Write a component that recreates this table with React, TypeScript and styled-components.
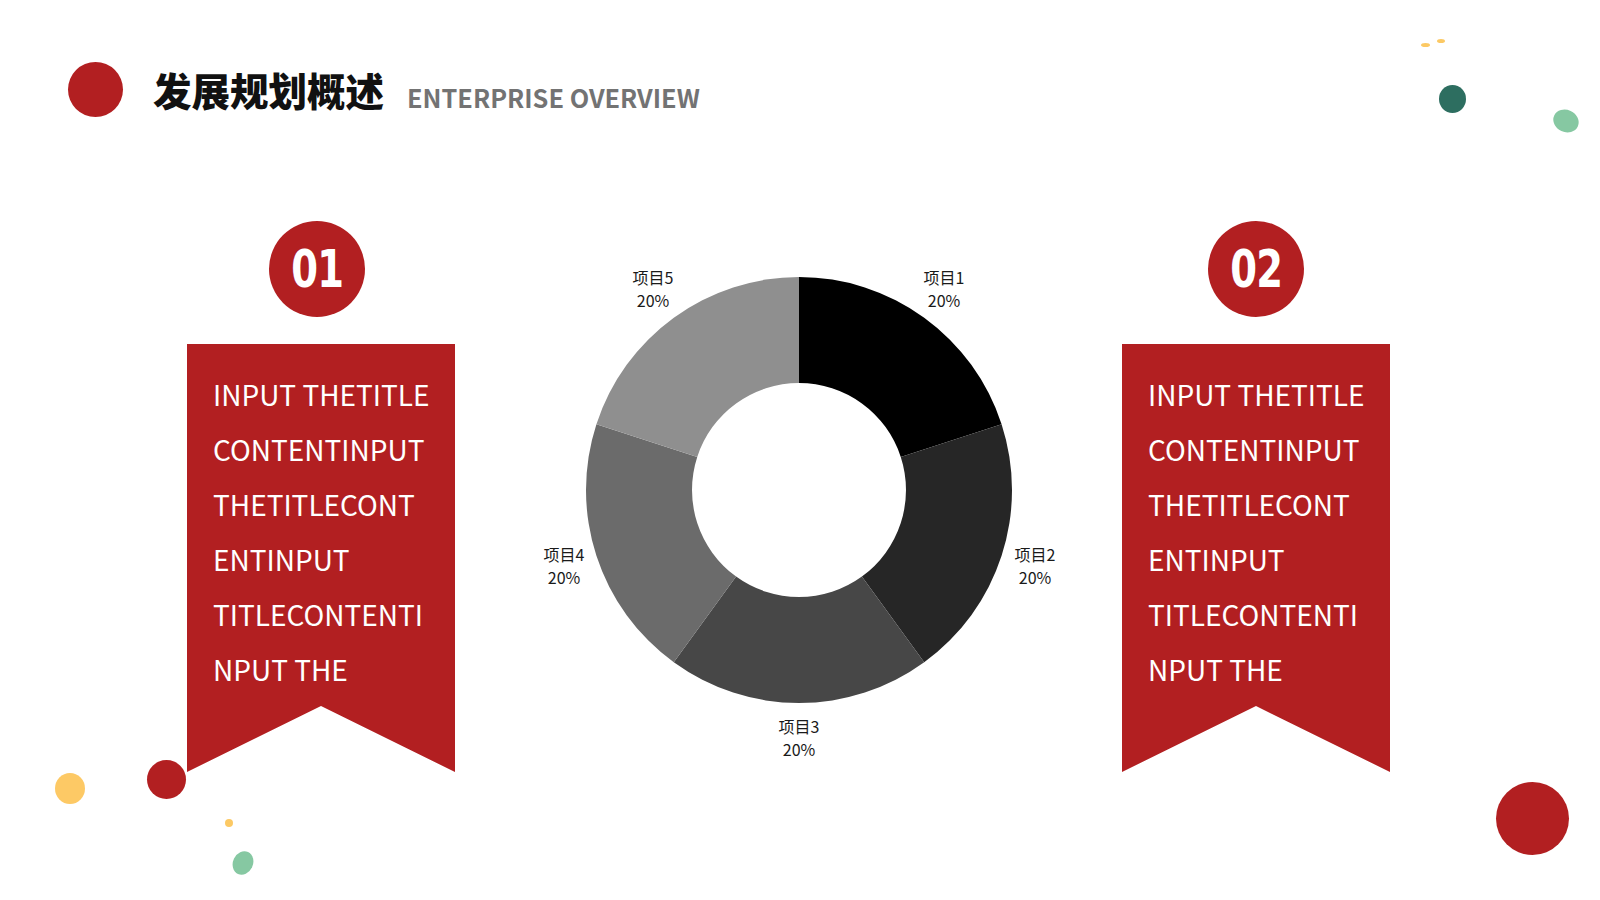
import * as React from "react";
import styled, { createGlobalStyle } from "styled-components";

const RED = "#b21f21";
const SANS = `"Noto Sans CJK SC", "Noto Sans", sans-serif`;

const GlobalStyle = createGlobalStyle`
  html, body {
    margin: 0;
    padding: 0;
    background: #ffffff;
  }
`;

const Page = styled.div`
  position: relative;
  width: 1600px;
  height: 900px;
  overflow: hidden;
  background: #ffffff;
  font-family: ${SANS};
`;

const Header = styled.header`
  display: flex;
  align-items: center;
  padding: 62px 0 0 68px;
  height: 55px;
`;

const HeaderDot = styled.div`
  width: 55px;
  height: 55px;
  border-radius: 50%;
  background: ${RED};
  flex-shrink: 0;
`;

const TitleGroup = styled.div`
  display: flex;
  align-items: baseline;
  margin-left: 30px;
`;

const Title = styled.h1`
  margin: 0;
  font-size: 38.5px;
  font-weight: 900;
  color: #111111;
  line-height: 1;
`;

const Subtitle = styled.span`
  margin-left: 23px;
  font-size: 25.3px;
  font-weight: 600;
  color: #737373;
  line-height: 1;
  transform: translateY(2px);
`;

const Main = styled.main`
  display: flex;
  align-items: flex-start;
  margin-top: 104px;
  padding-left: 187px;
`;

const Column = styled.section<{ $offset: number }>`
  display: flex;
  flex-direction: column;
  align-items: center;
  width: 268px;
  margin-left: ${(p) => p.$offset}px;
`;

const Badge = styled.div<{ $shift: number }>`
  width: 96px;
  height: 96px;
  border-radius: 50%;
  background: ${RED};
  display: flex;
  align-items: center;
  justify-content: center;
  color: #ffffff;
  margin-left: ${(p) => p.$shift * 2}px;
`;

const BadgeNum = styled.span`
  font-family: "DejaVu Sans", sans-serif;
  font-weight: 700;
  font-size: 52px;
  line-height: 1;
  transform: scaleX(0.74);
  letter-spacing: -1px;
`;

const Banner = styled.div`
  align-self: stretch;
  box-sizing: border-box;
  height: 428px;
  margin-top: 27px;
  padding: 23px 0 0 26px;
  background: ${RED};
  clip-path: polygon(0 0, 100% 0, 100% 100%, 50% calc(100% - 66px), 0 100%);
  color: #ffffff;
`;

const BannerLine = styled.div`
  font-size: 28px;
  font-weight: 400;
  line-height: 55px;
  white-space: nowrap;
`;

const Chart = styled.svg`
  display: block;
  margin-left: 44px;
  flex-shrink: 0;
  font-family: ${SANS};
`;

const Splash = styled.div<{
  $x: number;
  $y: number;
  $w: number;
  $h: number;
  $c: string;
  $r?: number;
}>`
  position: absolute;
  left: ${(p) => p.$x - p.$w / 2}px;
  top: ${(p) => p.$y - p.$h / 2}px;
  width: ${(p) => p.$w}px;
  height: ${(p) => p.$h}px;
  background: ${(p) => p.$c};
  border-radius: 50%;
  transform: rotate(${(p) => p.$r ?? 0}deg);
`;

const lines = [
  "INPUT THETITLE",
  "CONTENTINPUT",
  "THETITLECONT",
  "ENTINPUT",
  "TITLECONTENTI",
  "NPUT THE",
];

const CX = 300;
const CY = 269;
const R_OUT = 213;
const R_IN = 107;

const slices = [
  { color: "#000000", label: "项目1", lx: 445, ly: 56 },
  { color: "#262626", label: "项目2", lx: 536, ly: 333 },
  { color: "#474747", label: "项目3", lx: 300, ly: 505 },
  { color: "#6b6b6b", label: "项目4", lx: 65, ly: 333 },
  { color: "#8f8f8f", label: "项目5", lx: 154, ly: 56 },
];

const pt = (r: number, deg: number) => {
  const a = (deg * Math.PI) / 180;
  return `${(CX + r * Math.cos(a)).toFixed(2)} ${(CY + r * Math.sin(a)).toFixed(2)}`;
};

const slicePath = (i: number) => {
  const a0 = -90 + i * 72;
  const a1 = a0 + 72;
  return [
    `M ${pt(R_OUT, a0)}`,
    `A ${R_OUT} ${R_OUT} 0 0 1 ${pt(R_OUT, a1)}`,
    `L ${pt(R_IN, a1)}`,
    `A ${R_IN} ${R_IN} 0 0 0 ${pt(R_IN, a0)}`,
    "Z",
  ].join(" ");
};

const Card = ({
  num,
  offset,
  shift,
}: {
  num: string;
  offset: number;
  shift: number;
}) => (
  <Column $offset={offset}>
    <Badge $shift={shift}>
      <BadgeNum>{num}</BadgeNum>
    </Badge>
    <Banner>
      {lines.map((l) => (
        <BannerLine key={l}>{l}</BannerLine>
      ))}
    </Banner>
  </Column>
);

const App = () => {
  return (
    <Page>
      <GlobalStyle />
      <Header>
        <HeaderDot />
        <TitleGroup>
          <Title>发展规划概述</Title>
          <Subtitle>ENTERPRISE OVERVIEW</Subtitle>
        </TitleGroup>
      </Header>

      <Main>
        <Card num="01" offset={0} shift={-4} />
        <Chart width={600} height={560} viewBox="0 0 600 560">
          {slices.map((s, i) => (
            <path key={s.label} d={slicePath(i)} fill={s.color} />
          ))}
          {slices.map((s) => (
            <text
              key={s.label + "t"}
              x={s.lx}
              y={s.ly}
              fontSize={16}
              fill="#1a1a1a"
              textAnchor="middle"
              dominantBaseline="central"
            >
              <tspan x={s.lx}>{s.label}</tspan>
              <tspan x={s.lx} dy={23}>
                20%
              </tspan>
            </text>
          ))}
        </Chart>
        <Card num="02" offset={23} shift={0} />
      </Main>

      {/* paint splashes */}
      <Splash $x={1425} $y={45} $w={9} $h={4} $c="#fcc964" />
      <Splash $x={1441} $y={41} $w={8} $h={4} $c="#fcc964" />
      <Splash $x={1452} $y={99} $w={27} $h={28} $c="#2d6e60" />
      <Splash $x={1566} $y={121} $w={26} $h={22} $c="#86c8a2" $r={25} />
      <Splash $x={70} $y={788} $w={30} $h={31} $c="#fdc965" />
      <Splash $x={166} $y={779} $w={39} $h={39} $c={RED} />
      <Splash $x={229} $y={823} $w={8} $h={8} $c="#fcc964" />
      <Splash $x={243} $y={863} $w={20} $h={24} $c="#86c8a2" $r={25} />
      <Splash $x={1532} $y={818} $w={73} $h={73} $c={RED} />
    </Page>
  );
};

export default App;
